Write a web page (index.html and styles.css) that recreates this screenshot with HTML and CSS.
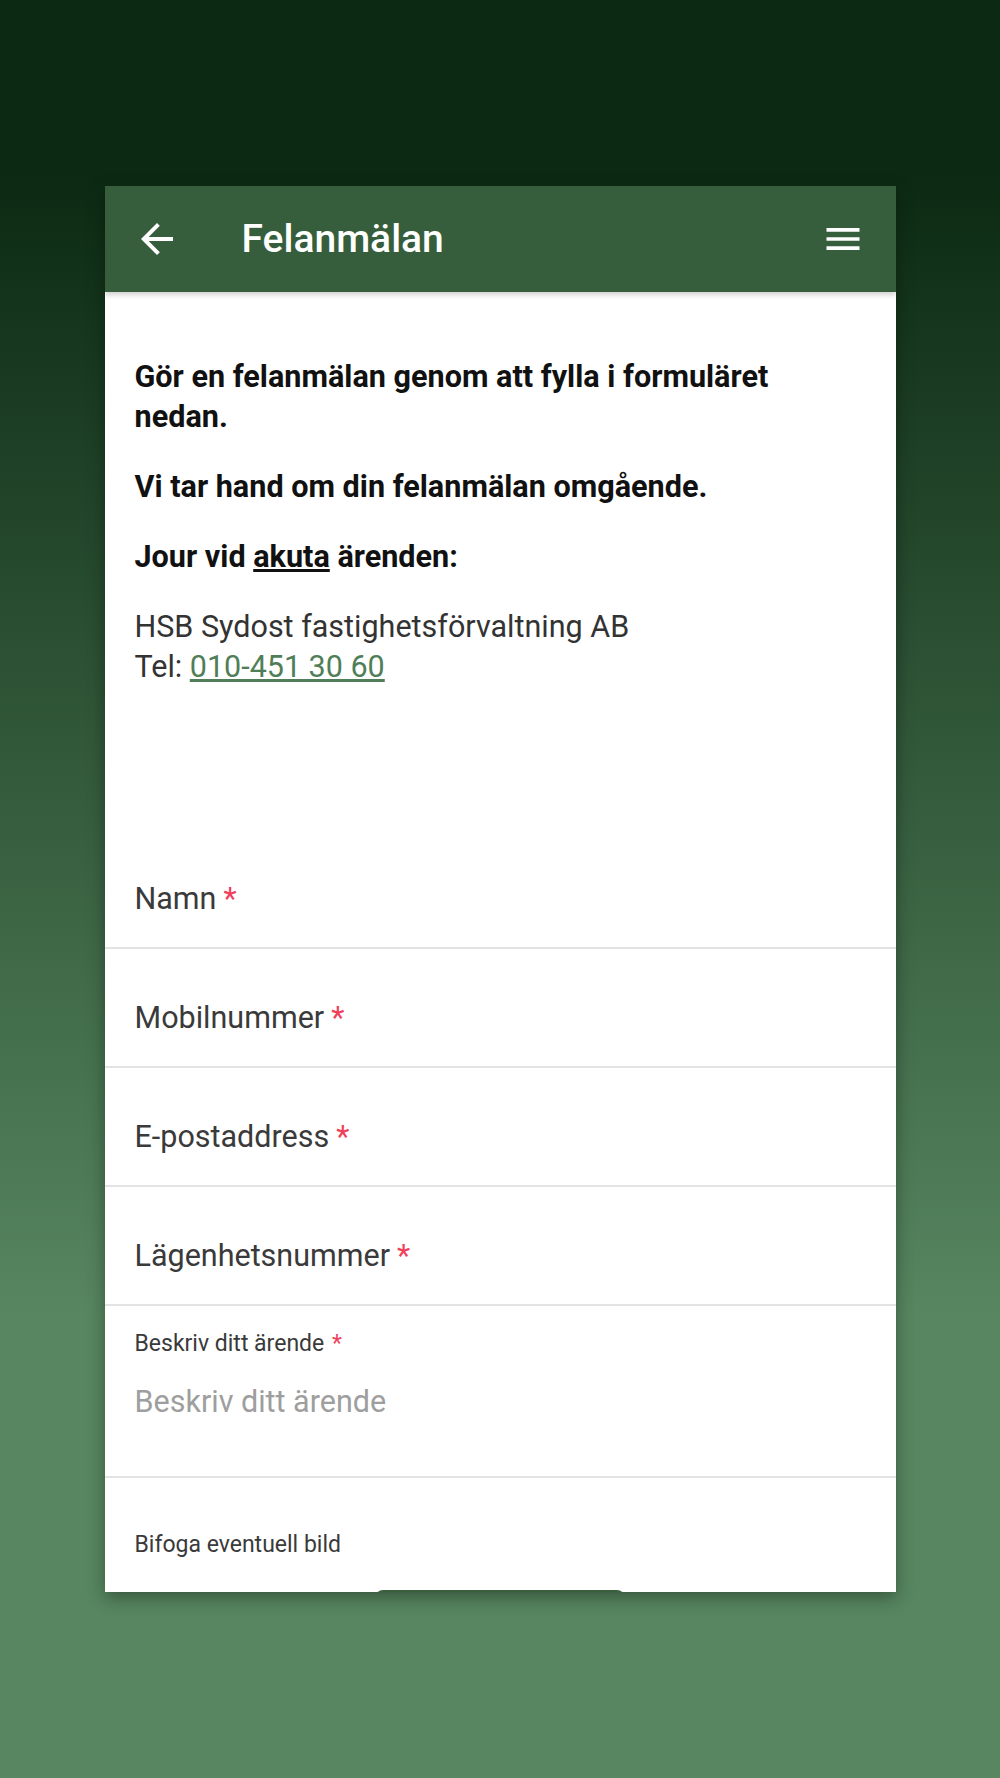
FILE: index.html
```html
<!DOCTYPE html>
<html lang="sv">
<head>
  <meta charset="UTF-8">
  <meta name="viewport" content="width=device-width, initial-scale=1.0">
  <title>Felanmälan</title>
  <link rel="stylesheet" href="styles.css">
</head>
<body>
  <div class="phone">
    <div class="toolbar">
      <button class="icon-button" aria-label="Tillbaka">
        <svg viewBox="0 0 24 24" width="48" height="48"><path fill="#fff" d="M20 11H7.83l5.59-5.59L12 4l-8 8 8 8 1.41-1.41L7.83 13H20v-2z"/></svg>
      </button>
      <h1 class="title">Felanmälan</h1>
      <button class="icon-button menu" aria-label="Meny">
        <svg viewBox="0 0 24 24" width="44" height="44"><path fill="#fff" d="M3 18h18v-2H3v2zm0-5h18v-2H3v2zm0-7v2h18V6H3z"/></svg>
      </button>
    </div>

    <div class="content">
      <div class="intro">
        <p class="strong">Gör en felanmälan genom att fylla i formuläret nedan.</p>
        <p class="strong">Vi tar hand om din felanmälan omgående.</p>
        <p class="strong">Jour vid <u>akuta</u> ärenden:</p>
        <p>HSB Sydost fastighetsförvaltning AB<br>Tel: <a href="#" class="phone-link">010-451 30 60</a></p>
      </div>

      <form class="form">
        <div class="field"><span class="label">Namn</span><span class="req">*</span></div>
        <div class="field"><span class="label">Mobilnummer</span><span class="req">*</span></div>
        <div class="field"><span class="label">E-postaddress</span><span class="req">*</span></div>
        <div class="field"><span class="label">Lägenhetsnummer</span><span class="req">*</span></div>
        <div class="field field-area">
          <div class="small-label">Beskriv ditt ärende <span class="req">*</span></div>
          <textarea class="area" placeholder="Beskriv ditt ärende"></textarea>
        </div>
        <div class="upload">
          <div class="small-label">Bifoga eventuell bild</div>
          <button type="button" class="upload-button" aria-label="Välj bild"></button>
        </div>
      </form>
    </div>
  </div>
</body>
</html>
```

FILE: styles.css
```css
body {
  margin: 0;
  height: 1778px;
  font-family: Roboto, "Noto Sans", sans-serif;
  background: linear-gradient(to bottom, #0c2a13 0%, #0c2a13 10%, #578660 74%, #578660 100%);
}
.phone {
  width: 791px;
  height: 1406px;
  margin: 0 auto;
  position: relative;
  top: 186px;
  background-color: #fff;
  overflow: hidden;
  box-shadow: 0 6px 16px rgba(0, 0, 0, 0.35);
}
.toolbar {
  height: 106px;
  display: flex;
  align-items: center;
  padding: 0 31px 0 28px;
  background-color: #365e3c;
  box-shadow: 0 3px 5px rgba(0, 0, 0, 0.18);
  position: relative;
}
.icon-button {
  background: none;
  border: none;
  padding: 0;
  display: flex;
  cursor: pointer;
}
.title {
  margin: 0 0 0 61px;
  flex: 1;
  color: #fff;
  font-size: 39px;
  font-weight: 500;
}
.content {
  padding: 65px 0 0;
}
.intro {
  padding: 0 30px;
  font-size: 30.5px;
  line-height: 40px;
  color: #333;
}
.intro p {
  margin: 0 0 30px;
}
.intro .strong {
  font-size: 30.6px;
  font-weight: 700;
  color: #111;
}
.phone-link {
  color: #4f7e58;
}
.form {
  margin-top: 143px;
}
.field {
  padding: 51px 30px 30px;
  border-bottom: 2px solid #e3e3e3;
  font-size: 30.5px;
  line-height: 36px;
  color: #3a3a3a;
}
.req {
  color: #f0405a;
  margin-left: 7px;
}
.field-area {
  padding-top: 27px;
  padding-bottom: 0;
}
.small-label {
  font-size: 23px;
  line-height: 22px;
  color: #3a3a3a;
}
.small-label .req {
  margin-left: 2px;
}
.area {
  display: block;
  width: 100%;
  height: 92px;
  margin-top: 29px;
  padding: 0;
  border: none;
  resize: none;
  font-family: inherit;
  font-size: 30.5px;
  line-height: 36px;
  color: #333;
  outline: none;
}
.area::placeholder {
  color: #9e9e9e;
}
.upload {
  padding: 56px 30px 0;
}
.upload-button {
  display: block;
  width: 250px;
  height: 60px;
  margin: 34px auto 0;
  border: none;
  border-radius: 8px;
  background-color: #3a5f3c;
}
```
